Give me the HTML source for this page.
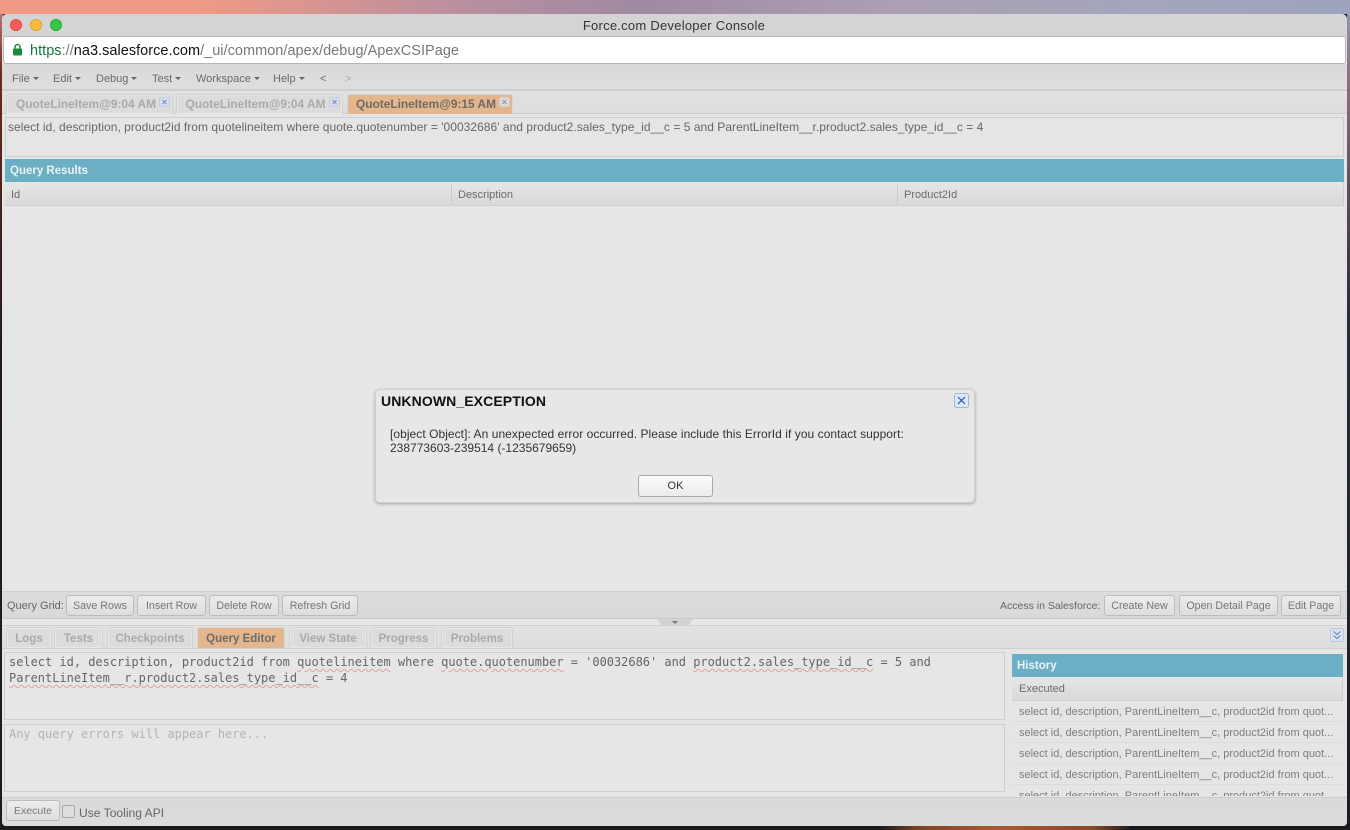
<!DOCTYPE html>
<html><head><meta charset="utf-8"><title>Force.com Developer Console</title>
<style>
html,body{margin:0;padding:0;width:1350px;height:830px;overflow:hidden;background:#1b1a1c}
body{position:relative;font-family:"Liberation Sans",sans-serif;font-size:11px;color:#666}
.a{position:absolute;box-sizing:border-box}
.t{position:absolute;white-space:nowrap;line-height:14px}
.tab{position:absolute;box-sizing:border-box;border:1px solid #d2d2d2;border-bottom:0;border-radius:3px 3px 0 0;background:#dcdcdc;text-align:center;font-weight:bold;color:#a9a9a9;font-size:11.5px;line-height:23px;box-shadow:inset 0 0 0 1px #e6e6e6}
.top{font-size:11.9px;line-height:19px}
.on{background:#e3b68e;color:#6f6a66;border-color:#d8d8d8;box-shadow:none}
.btn{position:absolute;box-sizing:border-box;border:1px solid #bcbcbc;border-radius:3px;background:linear-gradient(#ececec,#dedede);text-align:center;color:#777;font-size:10.7px;line-height:20px;height:21px}
.m{position:absolute;top:72px;color:#6b6b6b;font-size:11px;line-height:14px;white-space:nowrap}
.m i{display:inline-block;width:0;height:0;border:3px solid transparent;border-top:3px solid #666;border-bottom:0;margin-left:3px;vertical-align:2px}
.hd{position:absolute;box-sizing:border-box;background:#6cafc5;color:#e9f2f5;font-weight:bold;font-size:11.5px;line-height:23px;padding-left:5px}
.row{position:absolute;left:1012px;width:331px;height:21px;border-bottom:1px solid #dcdcdc;color:#7e7e7e;font-size:11px;line-height:22px;padding-left:7px;box-sizing:border-box;white-space:nowrap;overflow:hidden}
.mono{font-family:"DejaVu Sans Mono","Liberation Mono",monospace;font-size:12px;letter-spacing:-.023px;color:#666;line-height:16px;position:absolute;white-space:nowrap}
.sq{text-decoration:underline wavy #eaa098 1px;text-underline-offset:2px}
</style></head><body>
<div class="a" style="left:0;top:0;width:1350px;height:14px;background:linear-gradient(90deg,#f09a85 0,#ee9a85 200px,#b98f9f 460px,#a08aa2 640px,#aca0b4 900px,#a3a6bd 1150px,#9ea4bd 1350px)"></div>
<div class="a" style="left:0;top:14px;width:3px;height:816px;background:linear-gradient(#b07a72 0,#6b2a20 60px,#2a1a1a 300px,#1e1a1a 100%)"></div>
<div class="a" style="left:1347px;top:14px;width:3px;height:816px;background:linear-gradient(#9096ad 0,#8c6c7c 70px,#2a2c35 300px,#1b1c22 100%)"></div>
<div class="a" style="left:880px;top:826px;width:250px;height:4px;background:linear-gradient(90deg,#1b1a1c 0,#7a4428 15%,#a85a30 45%,#8a4a28 85%,#1d1c20 100%)"></div>

<div class="a" style="left:2px;top:14px;width:1345px;height:812px;background:#e5e5e5;border-radius:5px 5px 4px 4px;overflow:hidden">
  <div class="a" style="left:0;top:0;width:1345px;height:23px;background:#d4d4d4"></div>
  <div class="a" style="left:0;top:50px;width:1345px;height:27px;background:linear-gradient(#d9d9d9,#dedede);border-bottom:2px solid #cfcfcf"></div>
  <div class="a" style="left:0;top:77px;width:1345px;height:23px;background:linear-gradient(#e2e2e2,#dcdcdc);border-bottom:1px solid #cecece"></div>
  <div class="a" style="left:3px;top:103px;width:1339px;height:40px;background:#e5e5e5;border:1px solid #cdcdd2"></div>
  <div class="a" style="left:0;top:577px;width:1345px;height:28px;background:linear-gradient(#dcdcdc,#d9d9d9);border-top:1px solid #cfcfcf;border-bottom:1px solid #c9c9c9"></div>
  <div class="a" style="left:0;top:605px;width:1345px;height:8px;background:#e8e8e8"></div>
  <div class="a" style="left:0;top:611px;width:1345px;height:24px;background:linear-gradient(#e2e2e2,#dddddd);border-top:1px solid #d0d0d0;border-bottom:1px solid #cfcfcf"></div>
  <div class="a" style="left:0;top:783px;width:1345px;height:29px;background:linear-gradient(#dadada,#dcdcdc);border-top:1px solid #cdcdcd"></div>
</div>

<!-- traffic lights -->
<div class="a" style="left:10px;top:19px;width:12px;height:12px;border-radius:50%;background:#fc5b57;border:1px solid #e2463f"></div>
<div class="a" style="left:30px;top:19px;width:12px;height:12px;border-radius:50%;background:#fdbc40;border:1px solid #dfa032"></div>
<div class="a" style="left:50px;top:19px;width:12px;height:12px;border-radius:50%;background:#33c748;border:1px solid #27aa35"></div>
<div class="t" style="left:0;width:1348px;top:19px;text-align:center;font-size:13px;color:#333;letter-spacing:.25px">Force.com Developer Console</div>

<!-- url bar -->
<div class="a" style="left:3px;top:36px;width:1343px;height:28px;background:#fff;border:1px solid #b5b5b5;border-radius:3px"></div>
<svg class="a" style="left:12px;top:43px" width="11" height="13" viewBox="0 0 11 13"><path d="M3 6V4a2.5 2.5 0 0 1 5 0v2" fill="none" stroke="#1a8a3c" stroke-width="1.5"/><rect x="1" y="5.5" width="9" height="7" rx="1" fill="#1a8a3c"/></svg>
<div class="t" style="left:30px;top:43px;font-size:14.5px;line-height:17px;color:#777;letter-spacing:.03px"><span style="color:#0f7a3c">https</span>://<span style="color:#111">na3.salesforce.com</span>/_ui/common/apex/debug/ApexCSIPage</div>

<!-- menu -->
<div class="m" style="left:12px">File<i></i></div>
<div class="m" style="left:53px">Edit<i></i></div>
<div class="m" style="left:96px">Debug<i></i></div>
<div class="m" style="left:152px">Test<i></i></div>
<div class="m" style="left:196px">Workspace<i></i></div>
<div class="m" style="left:273px">Help<i></i></div>
<div class="m" style="left:320px">&lt;</div>
<div class="m" style="left:345px;color:#aaa">&gt;</div>

<!-- top tabs -->
<div class="tab top" style="left:6px;top:94px;width:167px;height:20px;padding-right:7px">QuoteLineItem@9:04 AM</div>
<div class="tab top" style="left:176px;top:94px;width:167px;height:20px;padding-right:8px">QuoteLineItem@9:04 AM</div>
<div class="tab top on" style="left:347px;top:94px;width:166px;height:20px;padding-right:8px">QuoteLineItem@9:15 AM</div>
<svg class="a" style="left:159px;top:97px" width="11" height="10"><rect x=".5" y=".5" width="10" height="9" rx="2" fill="#d6deee" stroke="#c2cde2"/><path d="M3.5 3l4 4M7.5 3l-4 4" stroke="#8094bd" stroke-width="1.2"/></svg>
<svg class="a" style="left:329px;top:97px" width="11" height="10"><rect x=".5" y=".5" width="10" height="9" rx="2" fill="#d6deee" stroke="#c2cde2"/><path d="M3.5 3l4 4M7.5 3l-4 4" stroke="#8094bd" stroke-width="1.2"/></svg>
<svg class="a" style="left:499px;top:97px" width="11" height="10"><rect x=".5" y=".5" width="10" height="9" rx="2" fill="#dcdcdc" stroke="#cfcfcf"/><path d="M3.5 3l4 4M7.5 3l-4 4" stroke="#999" stroke-width="1.2"/></svg>

<div class="t" style="left:8px;top:120px;font-size:12px;color:#666;letter-spacing:.033px">select id, description, product2id from quotelineitem where quote.quotenumber = '00032686' and product2.sales_type_id__c = 5 and ParentLineItem__r.product2.sales_type_id__c = 4</div>

<!-- Query results -->
<div class="hd" style="left:5px;top:159px;width:1339px;height:23px;line-height:24px">Query Results</div>
<div class="a" style="left:5px;top:182px;width:1339px;height:24px;background:linear-gradient(#e6e6e6,#d9d9d9);border-bottom:1px solid #cfcfcf;border-right:1px solid #cfcfcf"></div>
<div class="a" style="left:451px;top:183px;width:1px;height:22px;background:#cbcbcb"></div>
<div class="a" style="left:897px;top:183px;width:1px;height:22px;background:#cbcbcb"></div>
<div class="t" style="left:11px;top:188px;color:#6b6b6b">Id</div>
<div class="t" style="left:458px;top:188px;color:#6b6b6b">Description</div>
<div class="t" style="left:904px;top:188px;color:#6b6b6b">Product2Id</div>
<div class="a" style="left:5px;top:206px;width:1339px;height:385px;background:#e6e6e6"></div>

<!-- Query grid toolbar -->
<div class="t" style="left:7px;top:599px;color:#666;font-size:11px">Query Grid:</div>
<div class="btn" style="left:66px;top:595px;width:68px">Save Rows</div>
<div class="btn" style="left:137px;top:595px;width:69px">Insert Row</div>
<div class="btn" style="left:209px;top:595px;width:70px">Delete Row</div>
<div class="btn" style="left:282px;top:595px;width:76px">Refresh Grid</div>
<div class="t" style="left:1000px;top:599px;color:#666;font-size:10.5px">Access in Salesforce:</div>
<div class="btn" style="left:1104px;top:595px;width:71px">Create New</div>
<div class="btn" style="left:1179px;top:595px;width:99px">Open Detail Page</div>
<div class="btn" style="left:1281px;top:595px;width:60px">Edit Page</div>

<!-- splitter -->
<svg class="a" style="left:657px;top:618px" width="36" height="8"><path d="M0 1H36L32 7H4Z" fill="#d3d3d3"/><path d="M15 3h6l-3 3z" fill="#777"/></svg>

<!-- bottom tabs -->
<div class="tab" style="left:6px;top:627px;width:46px;height:21px">Logs</div>
<div class="tab" style="left:54px;top:627px;width:49px;height:21px">Tests</div>
<div class="tab" style="left:107px;top:627px;width:86px;height:21px">Checkpoints</div>
<div class="tab on" style="left:197px;top:627px;width:88px;height:21px">Query Editor</div>
<div class="tab" style="left:289px;top:627px;width:78px;height:21px">View State</div>
<div class="tab" style="left:370px;top:627px;width:67px;height:21px">Progress</div>
<div class="tab" style="left:441px;top:627px;width:72px;height:21px">Problems</div>
<svg class="a" style="left:1330px;top:628px" width="14" height="14"><rect x=".5" y=".5" width="13" height="13" rx="2" fill="#d9e3f1" stroke="#b6c8e2"/><path d="M3.5 3.5L7 6.5l3.5-3M3.5 7.5L7 10.5l3.5-3" fill="none" stroke="#6684b5" stroke-width="1.1"/></svg>

<!-- editor -->
<div class="a" style="left:4px;top:652px;width:1001px;height:68px;background:#e6e6e6;border:1px solid #cdcdd2"></div>
<div class="mono" style="left:9px;top:654px">select id, description, product2id from <span class="sq">quotelineitem</span> where <span class="sq">quote.quotenumber</span> = '00032686' and <span class="sq">product2.sales_type_id__c</span> = 5 and</div>
<div class="mono" style="left:9px;top:670px"><span class="sq">ParentLineItem__r.product2.sales_type_id__c</span> = 4</div>
<div class="a" style="left:4px;top:724px;width:1001px;height:68px;background:#e6e6e6;border:1px solid #cdcdd2"></div>
<div class="mono" style="left:9px;top:726px;color:#b3b3b3">Any query errors will appear here...</div>

<!-- history -->
<div class="hd" style="left:1012px;top:654px;width:331px;height:23px;line-height:24px">History</div>
<div class="a" style="left:1012px;top:677px;width:331px;height:24px;background:linear-gradient(#e6e6e6,#d9d9d9);border-bottom:1px solid #cfcfcf;border-right:1px solid #cfcfcf"></div>
<div class="t" style="left:1019px;top:682px;color:#6b6b6b">Executed</div>
<div class="row" style="top:701px">select id, description, ParentLineItem__c, product2id from quot...</div>
<div class="row" style="top:722px">select id, description, ParentLineItem__c, product2id from quot...</div>
<div class="row" style="top:743px">select id, description, ParentLineItem__c, product2id from quot...</div>
<div class="row" style="top:764px">select id, description, ParentLineItem__c, product2id from quot...</div>
<div class="row" style="top:785px;height:11px;border:0">select id, description, ParentLineItem__c, product2id from quot...</div>

<!-- bottom bar -->
<div class="btn" style="left:6px;top:800px;width:54px;font-size:10.5px;line-height:21px">Execute</div>
<div class="a" style="left:62px;top:805px;width:13px;height:13px;background:#ddd;border:1px solid #a9a9a9;border-radius:2px"></div>
<div class="t" style="left:79px;top:806px;font-size:12.1px;color:#666">Use Tooling API</div>

<!-- dialog -->
<div class="a" style="left:375px;top:389px;width:600px;height:114px;background:#e7e7e7;border:1px solid #d0d0d0;border-radius:5px;box-shadow:0 1px 3px rgba(0,0,0,.3)"></div>
<div class="t" style="left:381px;top:394px;font-size:14px;font-weight:bold;color:#111;letter-spacing:.1px">UNKNOWN_EXCEPTION</div>
<svg class="a" style="left:954px;top:393px" width="15" height="15"><rect x=".5" y=".5" width="14" height="14" rx="2" fill="#dfe8f6" stroke="#9db8e0"/><path d="M4 4l7 7M11 4l-7 7" stroke="#2a52a0" stroke-width="1.2"/></svg>
<div class="t" style="left:390px;top:427px;font-size:12px;color:#333;letter-spacing:.05px">[object Object]: An unexpected error occurred. Please include this ErrorId if you contact support:</div>
<div class="t" style="left:390px;top:441px;font-size:12px;color:#333">238773603-239514 (-1235679659)</div>
<div class="btn" style="left:638px;top:475px;width:75px;height:22px;background:linear-gradient(#fbfbfb,#ececec);border-color:#a8a8a8;color:#333;font-size:11px;line-height:20px">OK</div>
</body></html>
